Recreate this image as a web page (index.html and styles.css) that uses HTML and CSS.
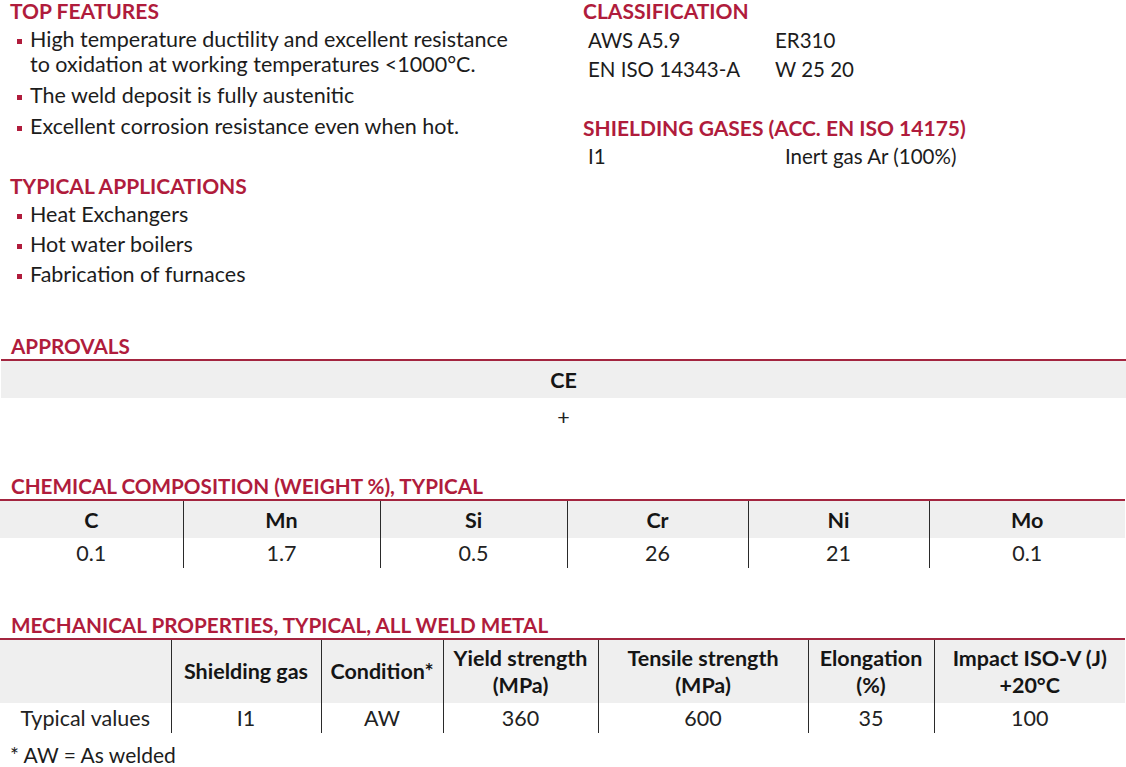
FILE: index.html
```html
<!DOCTYPE html>
<html lang="en">
<head>
<meta charset="utf-8">
<title>Product data</title>
<link rel="stylesheet" href="styles.css">
</head>
<body>
<div class="page">
  <section class="top">
    <div class="col-left">
      <h2 class="sec-title">TOP FEATURES</h2>
      <ul class="bullets features">
        <li>High temperature ductility and excellent resistance to oxidation at working temperatures &lt;1000°C.</li>
        <li>The weld deposit is fully austenitic</li>
        <li>Excellent corrosion resistance even when hot.</li>
      </ul>
      <h2 class="sec-title apps-title">TYPICAL APPLICATIONS</h2>
      <ul class="bullets apps">
        <li>Heat Exchangers</li>
        <li>Hot water boilers</li>
        <li>Fabrication of furnaces</li>
      </ul>
    </div>
    <div class="col-right">
      <h2 class="sec-title">CLASSIFICATION</h2>
      <div class="kv class-grid">
        <span>AWS A5.9</span><span>ER310</span>
        <span>EN ISO 14343-A</span><span>W 25 20</span>
      </div>
      <h2 class="sec-title gas-title">SHIELDING GASES (ACC. EN ISO 14175)</h2>
      <div class="kv gas-grid">
        <span>I1</span><span>Inert gas Ar (100%)</span>
      </div>
    </div>
  </section>

  <section class="block approvals">
    <h2 class="sec-title tbl-title">APPROVALS</h2>
    <table class="data approvals-table">
      <thead><tr><th>CE</th></tr></thead>
      <tbody><tr><td>+</td></tr></tbody>
    </table>
  </section>

  <section class="block chem">
    <h2 class="sec-title tbl-title">CHEMICAL COMPOSITION (WEIGHT %), TYPICAL</h2>
    <table class="data chem-table">
      <colgroup>
        <col class="c1"><col class="c2"><col class="c3"><col class="c4"><col class="c5"><col class="c6">
      </colgroup>
      <thead><tr><th>C</th><th>Mn</th><th>Si</th><th>Cr</th><th>Ni</th><th>Mo</th></tr></thead>
      <tbody><tr><td>0.1</td><td>1.7</td><td>0.5</td><td>26</td><td>21</td><td>0.1</td></tr></tbody>
    </table>
  </section>

  <section class="block mech">
    <h2 class="sec-title tbl-title">MECHANICAL PROPERTIES, TYPICAL, ALL WELD METAL</h2>
    <table class="data mech-table">
      <colgroup>
        <col class="m1"><col class="m2"><col class="m3"><col class="m4"><col class="m5"><col class="m6"><col class="m7">
      </colgroup>
      <thead>
        <tr>
          <th></th>
          <th>Shielding gas</th>
          <th>Condition*</th>
          <th>Yield strength<br>(MPa)</th>
          <th>Tensile strength<br>(MPa)</th>
          <th>Elongation<br>(%)</th>
          <th>Impact ISO-V (J)<br>+20°C</th>
        </tr>
      </thead>
      <tbody>
        <tr><td>Typical values</td><td>I1</td><td>AW</td><td>360</td><td>600</td><td>35</td><td>100</td></tr>
      </tbody>
    </table>
    <p class="footnote">* AW = As welded</p>
  </section>
</div>
</body>
</html>
```

FILE: styles.css
```css
* { box-sizing: border-box; }

html, body {
  margin: 0;
  padding: 0;
  background: #ffffff;
}

body {
  font-family: "Lato", "Liberation Sans", sans-serif;
  color: #1c1c1c;
  font-size: 21px;
}

.page {
  width: 1126px;
}

.sec-title {
  margin: 0;
  font-size: 21px;
  line-height: 22px;
  font-weight: 700;
  color: #b01c3c;
}

/* top two columns */
.top {
  display: grid;
  grid-template-columns: 573px 1fr;
  padding-left: 10px;
}

.bullets {
  list-style: none;
  margin: 5px 0 0 0;
  padding: 0 0 0 7px;
  font-size: 21.5px;
}

.features {
  width: 515px;
}

.bullets li {
  display: flex;
  line-height: 25px;
}

.bullets li::before {
  content: "";
  flex: none;
  width: 5px;
  height: 5px;
  margin-top: 12px;
  margin-right: 8px;
  background: #b01c3c;
}

.features li + li { margin-top: 6px; }

.apps-title { margin-top: 36px; }

.apps { margin-top: 5px; }
.apps li + li { margin-top: 5px; }

.kv {
  display: grid;
  padding-left: 5px;
  font-size: 20.5px;
}

.class-grid {
  grid-template-columns: 187px auto;
  line-height: 29px;
  margin-top: 4px;
}

.gas-title { margin-top: 33px; }

.gas-grid {
  grid-template-columns: 197px auto;
  line-height: 29px;
  margin-top: 3px;
}

/* tables */
.block .tbl-title {
  padding-left: 11px;
  font-size: 20.7px;
  margin-bottom: 2px;
}

.approvals { margin-top: 48px; }
.chem { margin-top: 40px; }
.mech { margin-top: 46px; }

table.data {
  width: 1125px;
  border-collapse: collapse;
  table-layout: fixed;
  border-top: 2px solid #a3253f;
  font-size: 21.5px;
}

table.data th {
  background: #efefef;
  font-weight: 700;
  color: #151515;
  padding: 0;
  text-align: center;
}

table.data td {
  padding: 0;
  text-align: center;
  color: #222222;
}

.approvals-table { margin-left: 1px; width: 1124px; }
.approvals-table th { height: 38px; }
.approvals-table td { height: 37px; }

.chem-table th,
.chem-table td,
.mech-table th,
.mech-table td {
  border-left: 1px solid #2a2a2a;
}

.chem-table th:first-child,
.chem-table td:first-child,
.mech-table th:first-child,
.mech-table td:first-child {
  border-left: none;
}

.chem-table th { height: 38px; }
.chem-table td { height: 30px; }

.c1 { width: 183px; }
.c2 { width: 197px; }
.c3 { width: 187px; }
.c4 { width: 181px; }
.c5 { width: 181px; }
.c6 { width: 196px; }

.m1 { width: 171px; }
.m2 { width: 150px; }
.m3 { width: 122px; }
.m4 { width: 155px; }
.m5 { width: 210px; }
.m6 { width: 126px; }
.m7 { width: 191px; }

.mech-table th {
  height: 64px;
  line-height: 27px;
}
.mech-table td {
  height: 30px;
  padding-top: 4px;
}

.footnote {
  margin: 11px 0 0 10px;
  line-height: 22px;
}
```
